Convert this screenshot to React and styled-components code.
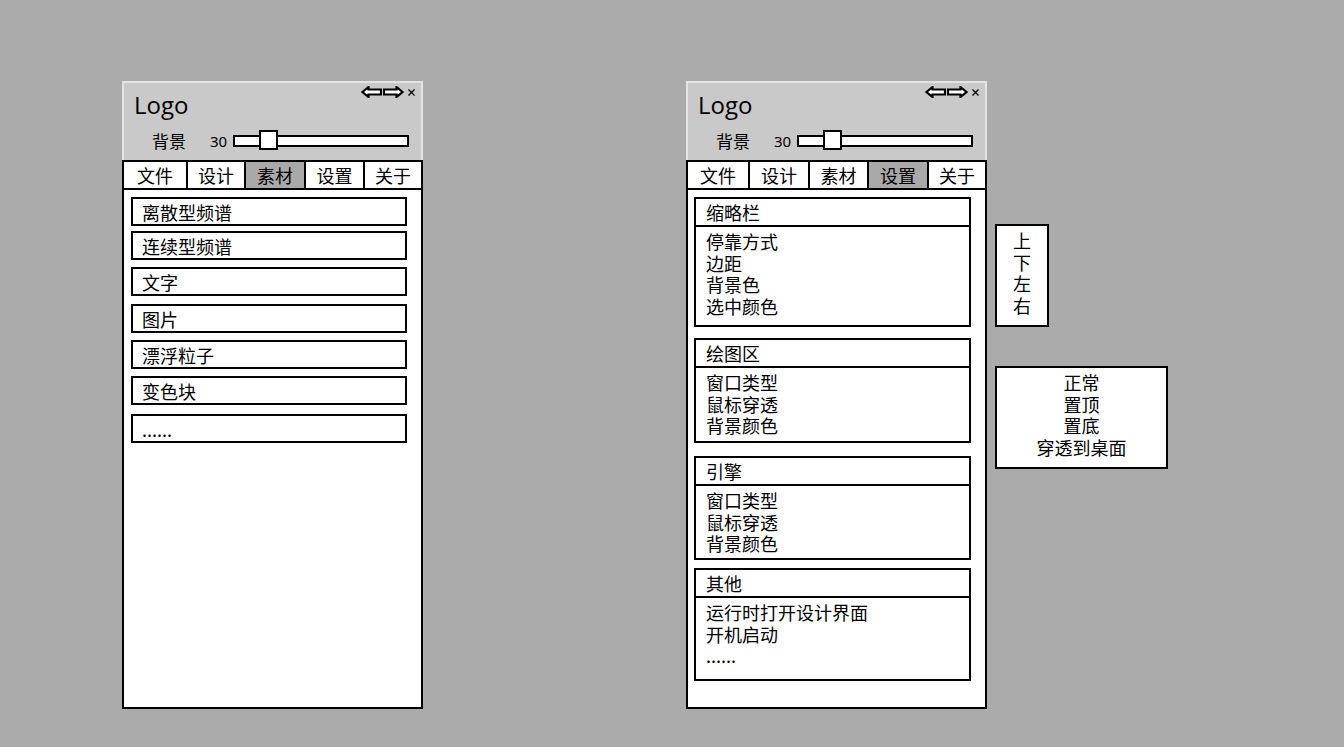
import React from 'react';
import styled, { createGlobalStyle } from 'styled-components';

const GlobalStyle = createGlobalStyle`
  body {
    margin: 0;
    background: #ababab;
    color: #000;
    font-family: "Noto Sans", "Noto Sans CJK SC", sans-serif;
  }
`;

const Page = styled.div`
  display: flex;
  align-items: flex-start;
  min-height: 100vh;
  box-sizing: border-box;
  padding: 81px 0 0 122px;
`;

const Window = styled.div`
  width: 301px;
  display: flex;
  flex-direction: column;
  margin-right: ${p => p.$after || 0}px;
`;

const Header = styled.div`
  height: 79px;
  box-sizing: border-box;
  background: #c9c9c9;
  border: 2px solid #e4e4e4;
  border-bottom: none;
  padding: 0 5px 0 10px;
`;

const TopRow = styled.div`
  display: flex;
  justify-content: space-between;
  align-items: flex-start;
`;

const Logo = styled.div`
  font-family: "Open Sans", "Noto Sans", sans-serif;
  font-size: 24px;
  line-height: 32px;
  margin-top: 6px;
`;

const Controls = styled.div`
  display: flex;
  align-items: center;
  gap: 1px;
  margin-top: 3px;
  svg {
    display: block;
  }
`;

const CloseIcon = styled.svg`
  margin-left: 2px;
`;

const SliderRow = styled.div`
  display: flex;
  align-items: center;
  margin-top: 10px;
  margin-left: 18px;
  height: 20px;
`;

const Label = styled.span`
  font-family: "Noto Sans CJK SC", sans-serif;
  font-size: 17px;
  line-height: 20px;
`;

const Value = styled.span`
  font-size: 15px;
  line-height: 20px;
  margin-left: 24px;
`;

const Track = styled.div`
  position: relative;
  width: 176px;
  height: 12px;
  box-sizing: border-box;
  border: 2px solid #000;
  background: #fff;
  margin-left: 6px;
`;

const Thumb = styled.div`
  position: absolute;
  left: 24px;
  top: -7px;
  width: 19px;
  height: 20px;
  box-sizing: border-box;
  border: 2px solid #000;
  background: #fff;
`;

const Body = styled.div`
  height: 549px;
  box-sizing: border-box;
  border: 2px solid #000;
  background: #fff;
  display: flex;
  flex-direction: column;
`;

const Tabs = styled.div`
  display: flex;
  border-bottom: 2px solid #000;
`;

const Tab = styled.div`
  flex: ${p => (p.$w ? `0 0 ${p.$w}px` : '1')};
  height: 26px;
  line-height: 26px;
  text-align: center;
  font-family: "Noto Sans CJK SC", sans-serif;
  font-size: 18px;
  background: ${p => (p.$active ? '#a9a9a9' : '#fff')};
  & + & {
    border-left: 2px solid #000;
  }
`;

const Content = styled.div`
  display: flex;
  flex-direction: column;
  padding: 7px 14px 0 ${p => p.$left}px;
`;

const Item = styled.div`
  height: 29px;
  box-sizing: border-box;
  border: 2px solid #000;
  padding-left: 9px;
  display: flex;
  align-items: center;
  font-family: "Noto Sans CJK SC", sans-serif;
  font-size: 18px;
  line-height: 22px;
  margin-top: ${p => p.$mt}px;
`;

const Group = styled.div`
  height: ${p => p.$h}px;
  box-sizing: border-box;
  border: 2px solid #000;
  margin-top: ${p => p.$mt}px;
  font-family: "Noto Sans CJK SC", sans-serif;
  font-size: 18px;
`;

const GroupTitle = styled.div`
  height: 26px;
  line-height: 26px;
  padding-left: 10px;
  border-bottom: 2px solid #000;
`;

const GroupBody = styled.div`
  padding: 4px 10px;
  line-height: 21.5px;
`;

const Menus = styled.div`
  display: flex;
  flex-direction: column;
  gap: 39px;
  margin-left: 8px;
  padding-top: 143px;
`;

const Menu = styled.div`
  width: ${p => p.$w}px;
  height: 103px;
  box-sizing: border-box;
  border: 2px solid #000;
  background: #fff;
  padding-top: 4px;
  text-align: center;
  font-family: "Noto Sans CJK SC", sans-serif;
  font-size: 18px;
  line-height: 21.5px;
`;

const Arrow = ({ flip }) => (
  <svg width="21" height="12" viewBox="0 0 21 12" style={flip ? { transform: 'scaleX(-1)' } : null}>
    <polygon
      points="1.5,6 7.5,1 7.5,3.5 20,3.5 20,8.5 7.5,8.5 7.5,11"
      fill="#fff"
      stroke="#000"
      strokeWidth="2.2"
      strokeLinejoin="miter"
    />
  </svg>
);

const tabNames = ['文件', '设计', '素材', '设置', '关于'];

const WindowHead = () => (
  <Header>
    <TopRow>
      <Logo>Logo</Logo>
      <Controls>
        <Arrow />
        <Arrow flip />
        <CloseIcon width="9" height="9" viewBox="0 0 9 9">
          <path d="M1.5 1.5 L7.5 7.5 M7.5 1.5 L1.5 7.5" stroke="#000" strokeWidth="1.4" />
        </CloseIcon>
      </Controls>
    </TopRow>
    <SliderRow>
      <Label>背景</Label>
      <Value>30</Value>
      <Track>
        <Thumb />
      </Track>
    </SliderRow>
  </Header>
);

const TabBar = ({ active, widths }) => (
  <Tabs>
    {tabNames.map((t, i) => (
      <Tab key={t} $active={t === active} $w={widths[i]}>{t}</Tab>
    ))}
  </Tabs>
);

const materials = [
  ['离散型频谱', 0],
  ['连续型频谱', 5],
  ['文字', 7],
  ['图片', 8],
  ['漂浮粒子', 7],
  ['变色块', 7],
  ['......', 9]
];

const groups = [
  { title: '缩略栏', h: 130, mt: 0, rows: ['停靠方式', '边距', '背景色', '选中颜色'] },
  { title: '绘图区', h: 105, mt: 11, rows: ['窗口类型', '鼠标穿透', '背景颜色'] },
  { title: '引擎', h: 104, mt: 13, rows: ['窗口类型', '鼠标穿透', '背景颜色'] },
  { title: '其他', h: 113, mt: 8, rows: ['运行时打开设计界面', '开机启动', '......'] }
];

export default function App() {
  return (
    <>
      <GlobalStyle />
      <Page>
        <Window $after={263}>
          <WindowHead />
          <Body>
            <TabBar active="素材" widths={[62, 56, 58, 57]} />
            <Content $left={7}>
              {materials.map(([name, mt]) => (
                <Item key={name} $mt={mt}>{name}</Item>
              ))}
            </Content>
          </Body>
        </Window>
        <Window>
          <WindowHead />
          <Body>
            <TabBar active="设置" widths={[60, 58, 57, 58]} />
            <Content $left={6}>
              {groups.map(g => (
                <Group key={g.title} $h={g.h} $mt={g.mt}>
                  <GroupTitle>{g.title}</GroupTitle>
                  <GroupBody>
                    {g.rows.map(r => (
                      <div key={r}>{r}</div>
                    ))}
                  </GroupBody>
                </Group>
              ))}
            </Content>
          </Body>
        </Window>
        <Menus>
          <Menu $w={54}>
            <div>上</div>
            <div>下</div>
            <div>左</div>
            <div>右</div>
          </Menu>
          <Menu $w={173}>
            <div>正常</div>
            <div>置顶</div>
            <div>置底</div>
            <div>穿透到桌面</div>
          </Menu>
        </Menus>
      </Page>
    </>
  );
}
